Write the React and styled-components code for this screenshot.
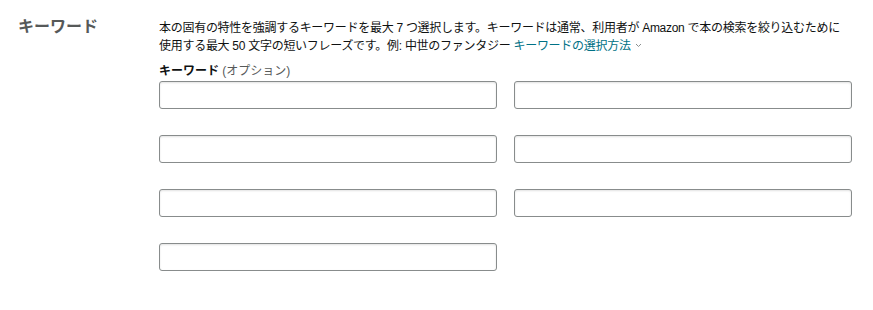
import styled, { createGlobalStyle } from "styled-components";

const GlobalStyle = createGlobalStyle`
  body {
    margin: 0;
    background: #fff;
    font-family: "Liberation Sans", Arial, "Noto Sans CJK JP", sans-serif;
    color: #0f1111;
  }
`;

const Section = styled.section`
  display: grid;
  grid-template-columns: 159px 693px;
  padding-top: 17px;
`;

const Heading = styled.h2`
  margin: 0;
  padding-left: 18px;
  font-size: 16px;
  line-height: 20px;
  font-weight: 700;
  color: #565959;
`;

const Body = styled.div`
  display: flex;
  flex-direction: column;
`;

const Description = styled.p`
  margin: 2px 0 0;
  max-width: 686px;
  font-size: 12px;
  line-height: 18px;
  letter-spacing: -0.28px;
`;

const Link = styled.a`
  color: #007185;
  text-decoration: none;
  cursor: pointer;

  svg {
    margin-left: 4px;
    vertical-align: 2px;
  }
`;

const Label = styled.label`
  margin: 7px 0 1px;
  font-size: 12px;
  line-height: 18px;
  font-weight: 700;
`;

const Optional = styled.span`
  font-weight: 400;
  color: #565959;
`;

const Fields = styled.div`
  display: grid;
  grid-template-columns: 338px 338px;
  column-gap: 17px;
  row-gap: 26px;
`;

const Input = styled.input`
  box-sizing: border-box;
  height: 28px;
  width: 100%;
  margin: 0;
  padding: 3px 7px;
  border: 1px solid #888c8c;
  border-radius: 3px;
  box-shadow: 0 1px 2px rgba(15, 17, 17, 0.12) inset;
  font: inherit;
  font-size: 13px;
  outline: none;
`;

const Chevron = () => (
  <svg width="7" height="5" viewBox="0 0 7 5" fill="none">
    <path d="M1 1l2.5 2.5L6 1" stroke="#8a8f8f" strokeWidth="1" />
  </svg>
);

const App = () => {
  return (
    <>
      <GlobalStyle />
      <Section>
        <Heading>キーワード</Heading>
        <Body>
          <Description>
            本の固有の特性を強調するキーワードを最大 7 つ選択します。キーワードは通常、利用者が Amazon で本の検索を絞り込むために使用する最大 50 文字の短いフレーズです。例: 中世のファンタジー{" "}
            <Link>
              キーワードの選択方法
              <Chevron />
            </Link>
          </Description>
          <Label>
            キーワード <Optional>(オプション)</Optional>
          </Label>
          <Fields>
            {Array.from({ length: 7 }).map((_, i) => (
              <Input key={i} type="text" />
            ))}
          </Fields>
        </Body>
      </Section>
    </>
  );
};

export default App;
